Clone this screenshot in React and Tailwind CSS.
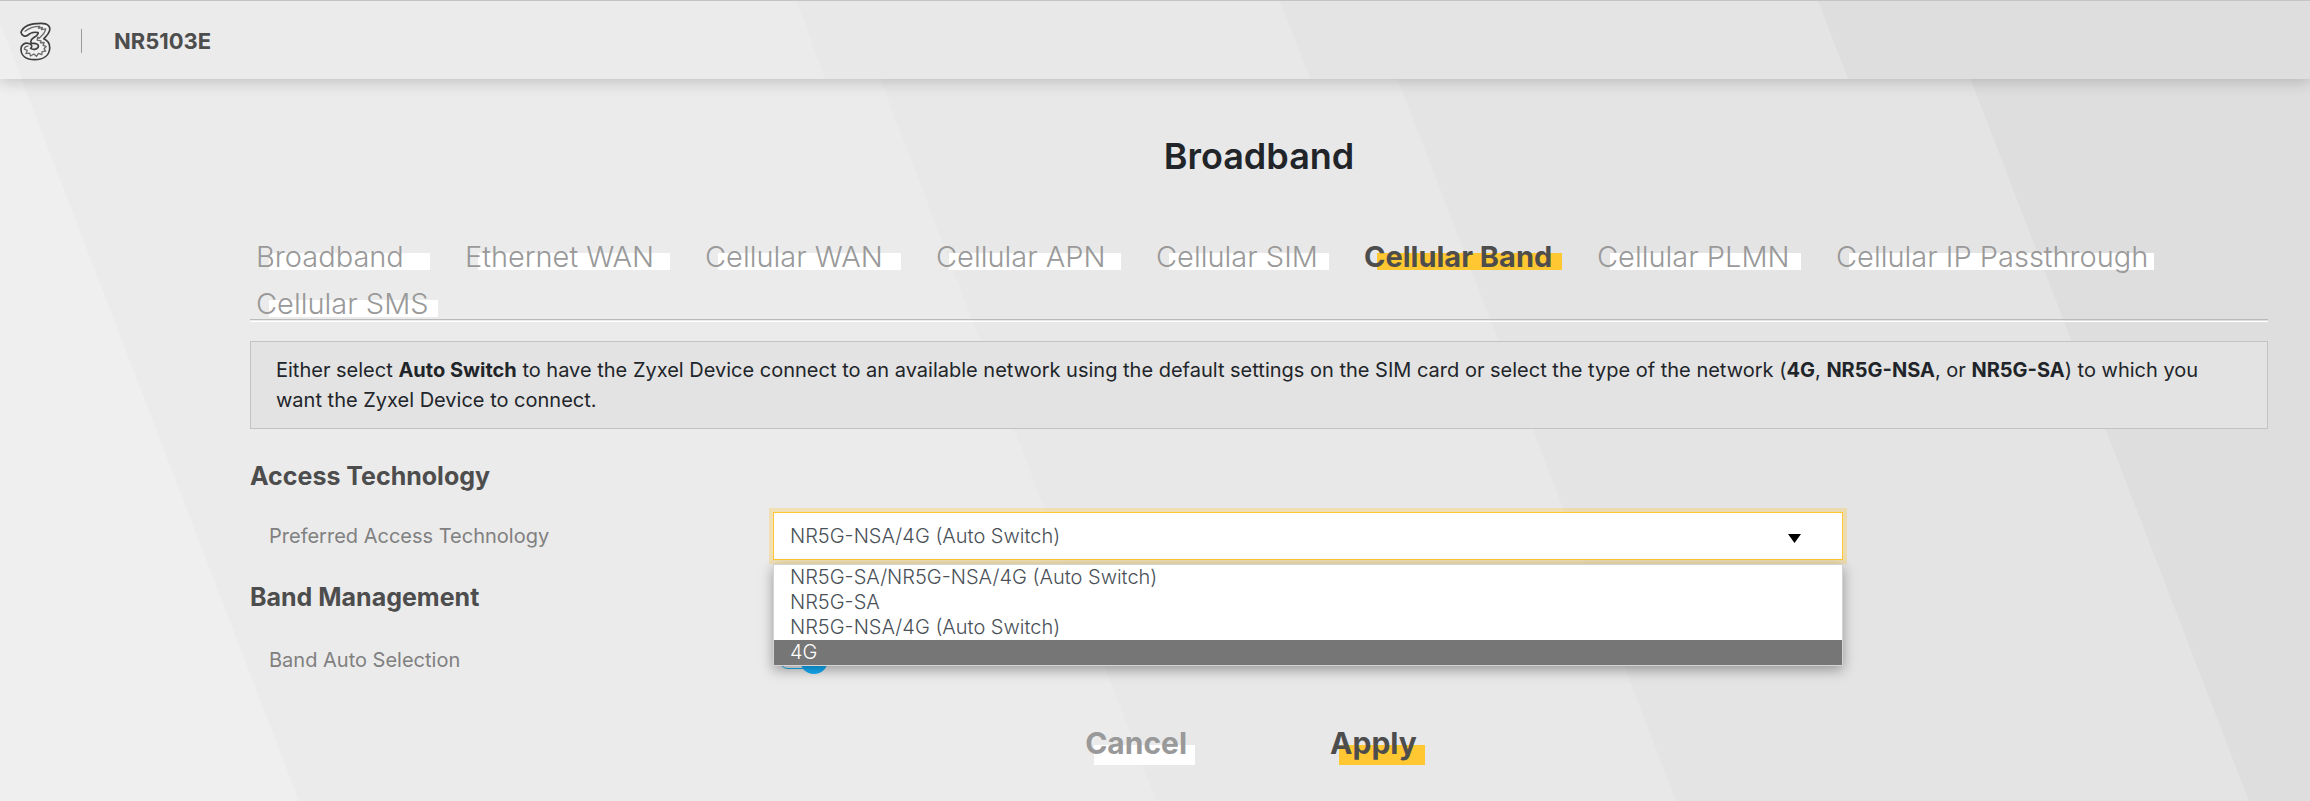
import { useState } from 'react';
import clsx from 'clsx';

const tabs = [
  { label: 'Broadband', width: 'min-w-[174px]' },
  { label: 'Ethernet WAN', width: 'min-w-[205px]' },
  { label: 'Cellular WAN', width: 'min-w-[196px]' },
  { label: 'Cellular APN', width: 'min-w-[185px]' },
  { label: 'Cellular SIM', width: 'min-w-[173px]' },
  { label: 'Cellular Band', width: 'min-w-[198px]' },
  { label: 'Cellular PLMN', width: 'min-w-[204px]' },
  { label: 'Cellular IP Passthrough', width: 'min-w-[318px]' },
  { label: 'Cellular SMS', width: 'min-w-[182px]' },
];

const technologies = [
  'NR5G-SA/NR5G-NSA/4G (Auto Switch)',
  'NR5G-SA',
  'NR5G-NSA/4G (Auto Switch)',
  '4G',
];

function Logo() {
  return (
    <svg viewBox="28 26 94 116" className="h-[39px] w-[31px]" fill="none" role="img" aria-label="Three">
      <path
        d="M31 56C38 36 64 29 92 29C113 29 122 39 117 53C114 63 106 69 100 76C114 82 119 93 118 106C116 128 97 139 72 139C48 139 32 128 31 109C30 94 43 86 55 90C66 94 65 101 60 105C69 111 84 107 84 98C84 91 74 89 62 89C58 82 64 76 70 72C78 67 84 62 83 57C70 54 58 58 50 66C43 70 33 66 31 56Z"
        fill="#f1f1f1"
        stroke="#3f3f3f"
        strokeWidth="5"
        strokeLinejoin="round"
      />
      <path
        d="M42 54C56 42 72 38 88 38L84 44L96 41L93 48L106 46C104 58 96 66 86 74L82 71L80 80L92 82L90 88L101 87L98 96L107 99L101 106L106 113L95 115L94 124L84 120L78 129L70 122L60 128L57 119L46 121L50 111L41 107C42 100 48 97 54 98"
        stroke="#6a6a6a"
        strokeWidth="4"
        strokeLinejoin="round"
      />
    </svg>
  );
}

function Header() {
  return (
    <header className="relative z-10 h-[79px] border-t border-[#c4c4c4] shadow-[0_2px_15px_rgba(0,0,0,0.2)]">
      <svg className="absolute inset-0 h-full w-full" viewBox="0 0 2310 78" preserveAspectRatio="none" aria-hidden="true">
        <rect width="2310" height="78" fill="#ebebeb" />
        <polygon points="0,22 0,78 22,78" fill="#efefef" />
        <polygon points="797,0 2310,0 2310,78 825,78" fill="#e8e8e8" />
        <polygon points="1280,0 2310,0 2310,78 1310,78" fill="#e4e4e4" />
        <polygon points="1818,0 2310,0 2310,78 1848,78" fill="#dedede" />
      </svg>
      <div className="relative flex h-full items-center pt-0.5 pl-5">
        <Logo />
        <span className="ml-[30px] h-6 w-px bg-[#9a9a9a]" />
        <span className="ml-8 text-[22px] font-bold text-[#4d4d4d]">NR5103E</span>
      </div>
    </header>
  );
}

function Tab({ label, width, active, onClick }) {
  return (
    <button
      type="button"
      role="tab"
      aria-selected={active}
      onClick={onClick}
      className={clsx(
        'relative isolate h-[47px] whitespace-nowrap text-left text-[29px] leading-[47px]',
        'before:absolute before:right-0 before:bottom-[10px] before:left-[13px] before:-z-10 before:h-[17px]',
        width,
        active
          ? 'font-bold text-[#4d4d4d] before:bg-[#ffc832]'
          : 'font-light text-[#999999] before:bg-white'
      )}
    >
      {label}
    </button>
  );
}

function ActionButton({ children, primary }) {
  return (
    <button
      type="button"
      className={clsx(
        'relative isolate flex h-10 items-start pr-2 text-[30px] leading-9 font-bold',
        'before:absolute before:right-0 before:bottom-0 before:left-[9px] before:-z-10 before:h-5',
        primary ? 'text-[#4d4d4d] before:bg-[#ffc832]' : 'text-[#999999] before:bg-white'
      )}
    >
      {children}
    </button>
  );
}

function SectionTitle({ children }) {
  return <h2 className="text-[25px] leading-[38px] font-bold text-[#4d4d4d]">{children}</h2>;
}

export default function App() {
  const [activeTab, setActiveTab] = useState('Cellular Band');
  const [technology, setTechnology] = useState('NR5G-NSA/4G (Auto Switch)');
  const [autoSelect, setAutoSelect] = useState(true);

  return (
    <div className="relative isolate min-h-screen font-['Inter',sans-serif]">
      {/* Slanted grey bands behind the page */}
      <svg className="absolute inset-0 -z-10 h-full w-full" viewBox="0 0 2310 801" preserveAspectRatio="none" aria-hidden="true">
        <rect width="2310" height="801" fill="#efefef" />
        <polygon points="-9,0 2310,0 2310,801 299,801" fill="#ebebeb" />
        <polygon points="850,0 2310,0 2310,801 1156,801" fill="#e8e8e8" />
        <polygon points="1367,0 2310,0 2310,801 1676,801" fill="#e4e4e4" />
        <polygon points="1940,0 2310,0 2310,801 2249,801" fill="#dedede" />
      </svg>

      <Header />

      <main className="pt-[53px] pr-[42px] pb-9 pl-[250px]">
        <h1 className="text-center text-[36px] leading-[48px] font-semibold text-[#212529]">Broadband</h1>

        <div role="tablist" className="mt-[53px] flex flex-wrap gap-x-[35px] pl-[6px]">
          {tabs.map((tab) => (
            <Tab
              key={tab.label}
              label={tab.label}
              width={tab.width}
              active={tab.label === activeTab}
              onClick={() => setActiveTab(tab.label)}
            />
          ))}
        </div>
        <div className="-mt-2 h-[3px] border-t border-b border-t-[#bababa] border-b-white" />

        <p className="mt-[19px] border border-[#c3c3c3] bg-[#e3e3e3] px-[25px] py-[13px] text-[20px] leading-[30px] font-normal text-[#212529]">
          Either select <b className="font-bold">Auto Switch</b> to have the Zyxel Device connect to an available network
          using the default settings on the SIM card or select the type of the network (<b className="font-bold">4G</b>,{' '}
          <b className="font-bold">NR5G-NSA</b>, or <b className="font-bold">NR5G-SA</b>) to which you
          <br />
          want the Zyxel Device to connect.
        </p>

        <div className="mt-7">
          <SectionTitle>Access Technology</SectionTitle>
        </div>
        <div className="mt-[17px] grid grid-cols-[523fr_1070fr_425fr] items-center">
          <label htmlFor="technology" className="pl-[19px] text-[20px] font-normal text-[#808080]">
            Preferred Access Technology
          </label>
          <div className="relative z-10">
            <select
              id="technology"
              value={technology}
              onChange={(e) => setTechnology(e.target.value)}
              className="block h-12 w-full appearance-none border border-[#ffc832] bg-white px-4 text-[20px] font-light text-[#495057] ring-4 ring-[#ffc832]/30 outline-none"
            >
              {technologies.map((item) => (
                <option key={item}>{item}</option>
              ))}
            </select>
            <svg className="pointer-events-none absolute top-[22px] right-[42px] h-[9px] w-[13px]" viewBox="0 0 13 9" aria-hidden="true">
              <path d="M0 0H13L6.5 9Z" fill="#000" />
            </svg>
            <ul
              role="listbox"
              aria-label="Preferred Access Technology"
              className="absolute top-[52px] right-0 left-0 border border-[#d3d3d3] bg-white text-[20px] leading-[25px] font-light text-[#495057] shadow-[0_4px_12px_rgba(0,0,0,0.35)]"
            >
              {technologies.map((item) => (
                <li
                  key={item}
                  role="option"
                  aria-selected={item === technology}
                  className={clsx('px-4', item === '4G' && 'bg-[#767676] text-white')}
                >
                  {item}
                </li>
              ))}
            </ul>
          </div>
        </div>

        <div className="mt-[18px]">
          <SectionTitle>Band Management</SectionTitle>
        </div>
        <div className="mt-[30px] grid grid-cols-[523fr_1070fr_425fr] items-center">
          <label htmlFor="auto-select" className="pl-[19px] text-[20px] leading-7 font-normal text-[#808080]">
            Band Auto Selection
          </label>
          <div className="relative flex h-7 w-[60px] items-center pl-[6px]">
            <input
              id="auto-select"
              type="checkbox"
              role="switch"
              checked={autoSelect}
              onChange={(e) => setAutoSelect(e.target.checked)}
              className="peer h-[18px] w-10 appearance-none rounded-full border border-[#14b0fa] bg-white/40"
            />
            <span className="pointer-events-none absolute left-[6px] size-7 rounded-full bg-[#9a9a9a] peer-checked:left-[27px] peer-checked:bg-[#14b0fa]" />
          </div>
        </div>

        <div className="mt-[51px] flex justify-center gap-[135px] pr-2">
          <ActionButton>Cancel</ActionButton>
          <ActionButton primary>Apply</ActionButton>
        </div>
      </main>
    </div>
  );
}
